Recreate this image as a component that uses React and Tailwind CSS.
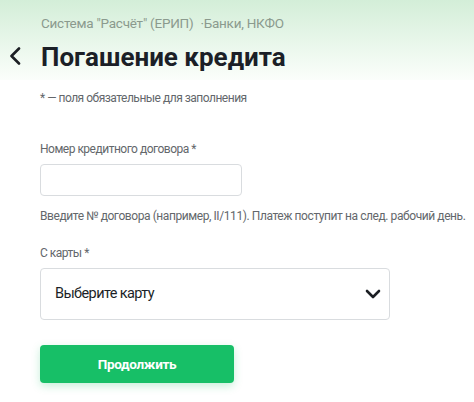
import React from 'react';

const font = { fontFamily: 'Roboto, "Noto Sans", sans-serif' };

const ChevronLeft = () => (
  <svg width="14" height="18" viewBox="0 0 14 18" fill="none">
    <path d="M11 1.5 L3.5 9 L11 16.5" stroke="#1c1f24" strokeWidth="2.6" strokeLinecap="round" strokeLinejoin="round" />
  </svg>
);

const ChevronDown = () => (
  <svg width="16" height="10" viewBox="0 0 16 10" fill="none">
    <path d="M2 2 L8 8 L14 2" stroke="#1c1f24" strokeWidth="2.6" strokeLinecap="round" strokeLinejoin="round" />
  </svg>
);

export default function App() {
  return (
    <div className="w-[474px] h-[402px] bg-white overflow-hidden" style={font}>
      {/* header */}
      <div className="h-[80px] bg-gradient-to-b from-[#d3eed8] to-[#fbfefb] pt-[14px]">
        <div className="pl-[41px] text-[13.5px] leading-[18px] tracking-[-0.25px] text-[#8b9a8e]">
          Система "Расчёт" (ЕРИП) <span className="ml-1">·Банки, НКФО</span>
        </div>
        <div className="flex items-center mt-[9px]">
          <div className="w-[41px] flex justify-start pl-[8px] -mt-[2px]">
            <ChevronLeft />
          </div>
          <h1 className="text-[26px] leading-[32px] font-bold text-[#1b1f27]">Погашение кредита</h1>
        </div>
      </div>

      <div className="pl-[40px]">
        <p className="mt-[10px] text-[12px] leading-[16px] tracking-[-0.5px] text-[#63676b]">* — поля обязательные для заполнения</p>

        <label className="block mt-[35px] text-[12px] leading-[17px] tracking-[-0.5px] text-[#63676b]">Номер кредитного договора *</label>
        <div className="mt-[6px] w-[202px] h-[32px] rounded-[4px] border border-[#d9dcdf] bg-white" />

        <p className="mt-[12px] text-[12px] leading-[17px] tracking-[-0.42px] text-[#63676b] whitespace-nowrap">
          Введите № договора (например, II/111). Платеж поступит на след. рабочий день.
        </p>

        <label className="block mt-[20px] text-[12px] leading-[17px] tracking-[-0.5px] text-[#63676b]">С карты *</label>
        <div className="mt-[6px] w-[350px] h-[52px] rounded-[4px] border border-[#d9dcdf] bg-white flex items-center justify-between pl-[14px] pr-[8px]">
          <span className="text-[14.5px] tracking-[-0.6px] text-[#1b1f27]">Выберите карту</span>
          <ChevronDown />
        </div>

        <button className="mt-[25px] w-[194px] h-[38px] rounded-[4px] bg-[#17bf67] text-white text-[13.5px] tracking-[-0.3px] font-bold shadow-[0_3px_8px_rgba(23,191,103,0.25)]">
          Продолжить
        </button>
      </div>
    </div>
  );
}
